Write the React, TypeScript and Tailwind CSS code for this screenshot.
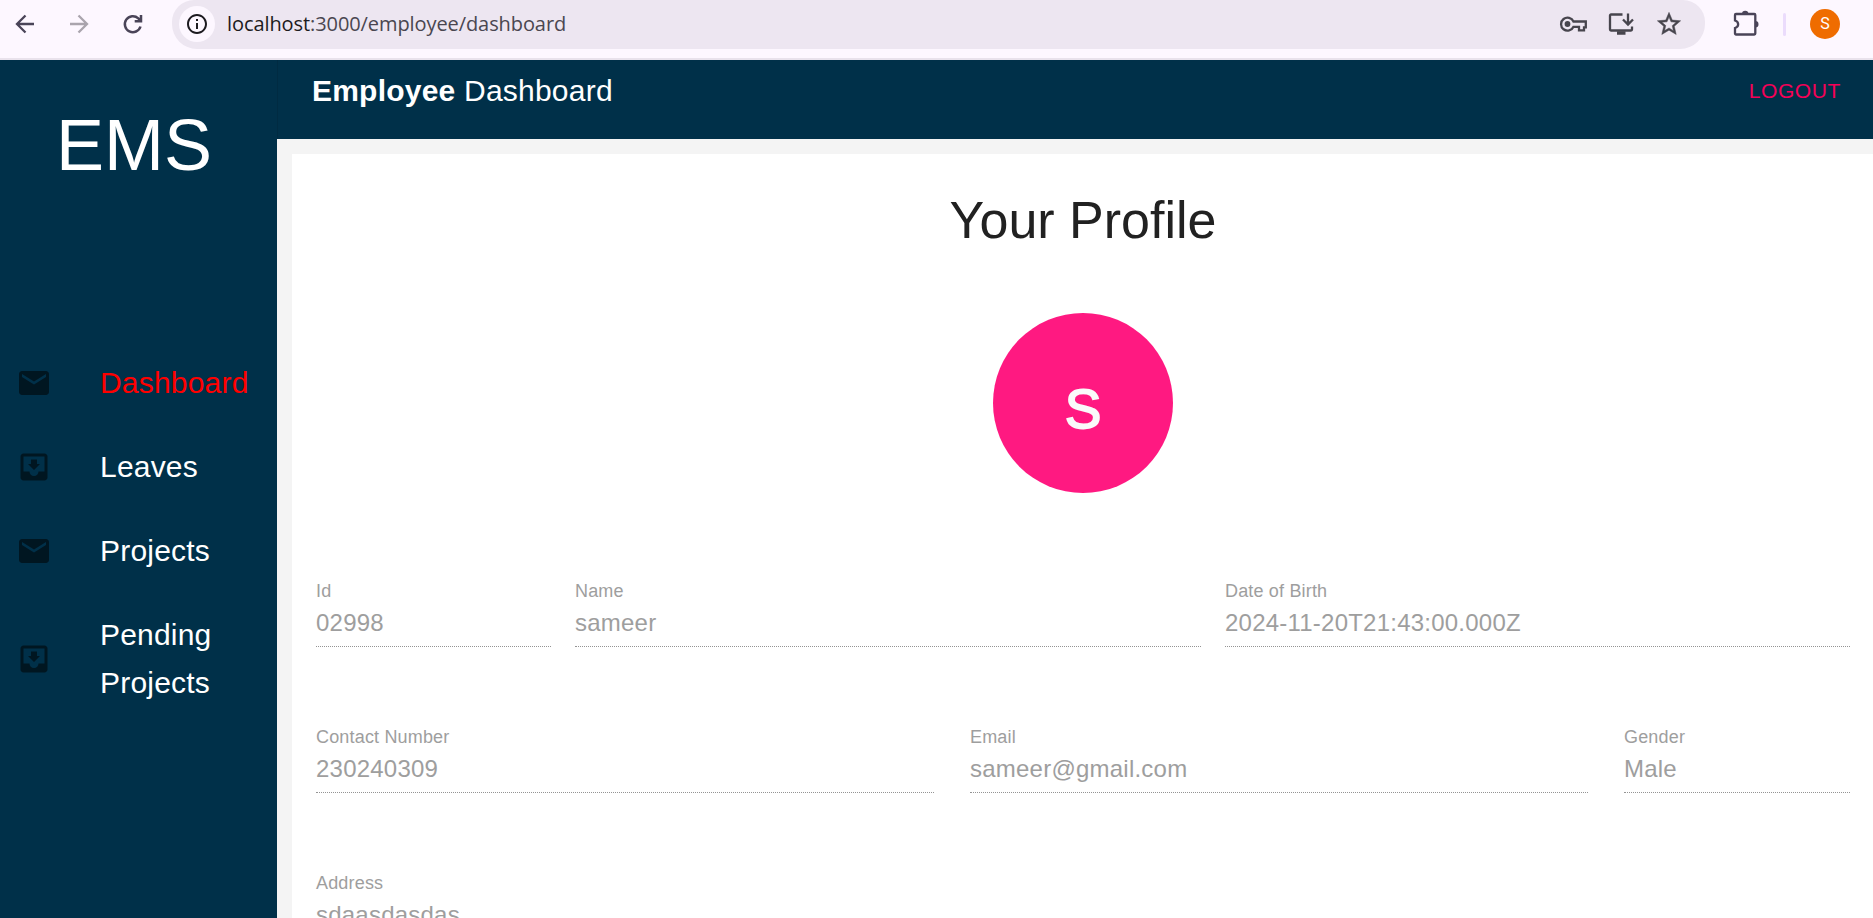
import { MdEmail, MdMoveToInbox, MdStarOutline, MdOutlineInfo } from 'react-icons/md';

type FieldProps = { label: string; value: string; className: string };

function Field({ label, value, className }: FieldProps) {
  return (
    <div className={`flex h-[72px] flex-col border-b border-dotted border-[#949494] pt-1 text-[#9e9e9e] ${className}`}>
      <span className="text-[18px] leading-6 tracking-[0.17px]">{label}</span>
      <span className="mt-1.5 text-[24px] leading-7 tracking-[0.225px]">{value}</span>
    </div>
  );
}

const menu = [
  { label: 'Dashboard', Icon: MdEmail, color: 'text-[#ff0000]' },
  { label: 'Leaves', Icon: MdMoveToInbox, color: 'text-white' },
  { label: 'Projects', Icon: MdEmail, color: 'text-white' },
  { label: 'Pending Projects', Icon: MdMoveToInbox, color: 'text-white' },
];

function BrowserBar() {
  return (
    <div className="flex h-[60px] shrink-0 items-start border-b-2 border-[#e9e2ec] bg-[#fdf7ff]">
      <div className="flex h-12 w-[172px] shrink-0 items-center gap-[30px] pl-[13px] text-[#4a4458]">
        <svg viewBox="0 0 24 24" className="size-6" fill="none" stroke="currentColor" strokeWidth="2.300"><path d="M21 12H4.500M12.500 3.500L4 12l8.500 8.500" /></svg>
        <svg viewBox="0 0 24 24" className="size-6 text-[#aaa4ad]" fill="none" stroke="currentColor" strokeWidth="2.300"><path d="M3 12h16.500M11.500 3.500L20 12l-8.500 8.500" /></svg>
        <svg viewBox="0 0 24 24" className="size-6" fill="none" stroke="currentColor" strokeWidth="2.500"><path d="M19.500 14.500a8 8 0 1 1-2.200-8.200l2.200 2.200M20 3v6.300h-6.300" /></svg>
      </div>
      <div className="flex h-[49px] w-[1533px] shrink-0 items-center rounded-b-[25px] rounded-t-[22px] bg-[#ede6f1] pb-0.5 pl-[7px] pr-[22px]">
        <span className="flex size-9 items-center justify-center rounded-full bg-[#fdf7ff] text-[#1d1b20]"><MdOutlineInfo className="size-6" /></span>
        <span className="ml-3 flex-1 font-['Open_Sans',sans-serif] text-[20px] tracking-[-0.085px] text-[#4a4650]"><span className="text-[#1d1b20]">localhost</span>:3000/employee/dashboard</span>
        <div className="flex items-center gap-5 text-[#47454d]">
          <svg viewBox="0 0 28 28" className="size-7" fill="none" stroke="currentColor" strokeWidth="2.300"><path d="M14.500 11.500h12.300v5.800h-1.800v3h-5v-3.500h-5.500a6.500 6.500 0 1 1 0-5.300Z" /><circle cx="8.500" cy="14" r="2.900" fill="currentColor" stroke="none" /></svg>
          <svg viewBox="0 0 28 28" className="size-7" fill="none" stroke="currentColor" strokeWidth="2.300"><path d="M15.500 4.500H4a1 1 0 0 0-1 1v14a1 1 0 0 0 1 1h20a1 1 0 0 0 1-1v-3M21 3.500v10.500M16 9.500l5 5 5-5" /><path d="M10 23h8.500" strokeWidth="3.500" /></svg>
          <MdStarOutline className="size-7" stroke="currentColor" strokeWidth="0.400" />
        </div>
      </div>
      <div className="flex h-12 flex-1 items-center pl-[27px]">
        <svg viewBox="0 0 28 28" className="size-7 text-[#4a4458]" fill="none" stroke="currentColor" strokeWidth="2.300"><path d="M4 4h18.300a1 1 0 0 1 1 1v18.500a1 1 0 0 1-1 1H4a1 1 0 0 1-1-1v-5.500c4.200-1.200 4.200-6.300 0-7.500V5a1 1 0 0 1 1-1Z" /><path d="M10 4a3.200 3.200 0 0 1 6.400 0ZM23.300 11a3.200 3.200 0 0 1 0 6.400Z" fill="currentColor" stroke="none" /></svg>
        <span className="ml-[23px] h-[23px] w-[3px] rounded bg-[#ebdcfc]" />
        <span className="ml-6 flex size-[30px] items-center justify-center rounded-full bg-[#ef6c00] font-[Roboto,sans-serif] text-[16px] text-white">S</span>
      </div>
    </div>
  );
}

export default function App() {
  return (
    <div className="flex h-[918px] w-[1873px] flex-col overflow-hidden bg-[#f4f4f4] font-['Liberation_Sans',Arial,sans-serif]">
      <BrowserBar />
      <div className="flex min-h-0 flex-1">
        <aside className="w-[277px] shrink-0 bg-[#003049]">
          <h1 className="h-[281px] pl-14 pt-[43px] text-[72px] leading-[84px] text-white">EMS</h1>
          <nav>
            {menu.map(({ label, Icon, color }) => (
              <a key={label} className="flex items-center py-[18px] pl-4">
                <Icon className="size-9 shrink-0 text-black/54" />
                <span className={`ml-12 w-[150px] text-[30px] leading-[48px] tracking-[0.2px] ${color}`}>{label}</span>
              </a>
            ))}
          </nav>
        </aside>
        <main className="flex flex-1 flex-col">
          <header className="flex h-[79px] shrink-0 items-start justify-between border-l border-[#002b42] bg-[#003049] pl-[34px] pr-8 text-white">
            <div className="pt-[13px] text-[30px] leading-9 tracking-[0.22px]"><b>Employee</b> Dashboard</div>
            <button className="pt-[19px] text-[21px] leading-6 tracking-[0.6px] text-[#f50057]">LOGOUT</button>
          </header>
          <section className="ml-[15px] mt-[15px] flex flex-1 flex-col overflow-hidden bg-white pl-6 pr-[23px]">
            <h2 className="pt-9 text-center text-[52px] leading-[60px] text-[#212121]">Your Profile</h2>
            <div className="mx-auto mt-[63px] flex size-[180px] shrink-0 items-center justify-center rounded-full bg-[#ff1981] pt-3 text-[55px] text-[#fafafa] [-webkit-text-stroke:1.8px_#fafafa]">S</div>
            <div className="mt-[82px] flex shrink-0 gap-6">
              <Field label="Id" value="02998" className="w-[235px]" />
              <Field label="Name" value="sameer" className="w-[626px]" />
              <Field label="Date of Birth" value="2024-11-20T21:43:00.000Z" className="flex-1" />
            </div>
            <div className="mt-[74px] flex shrink-0 gap-9">
              <Field label="Contact Number" value="230240309" className="w-[618px]" />
              <Field label="Email" value="sameer@gmail.com" className="w-[618px]" />
              <Field label="Gender" value="Male" className="flex-1" />
            </div>
            <div className="mt-[74px] flex shrink-0">
              <Field label="Address" value="sdaasdasdas" className="w-full" />
            </div>
          </section>
        </main>
      </div>
    </div>
  );
}
